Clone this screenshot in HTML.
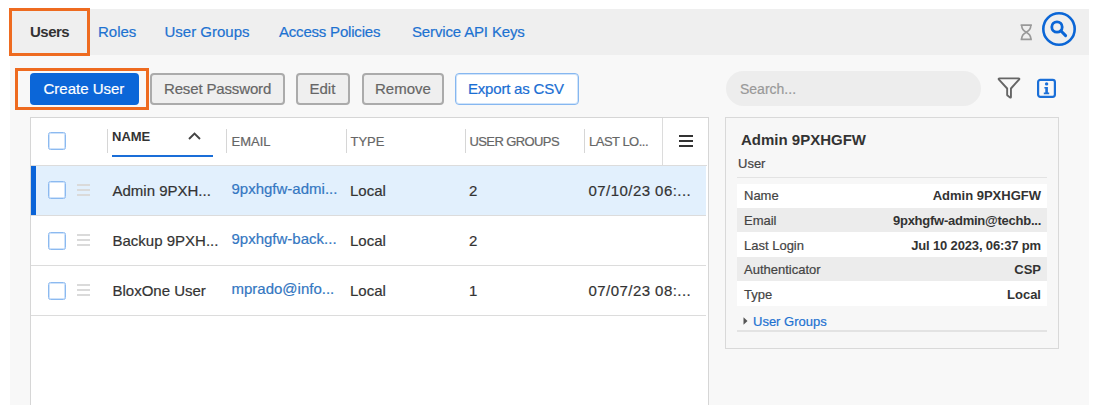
<!DOCTYPE html>
<html><head><meta charset="utf-8">
<style>
*{box-sizing:border-box;margin:0;padding:0}
html,body{width:1097px;height:414px;overflow:hidden;background:#fff;font-family:"Liberation Sans",sans-serif}
.a{position:absolute}
.t{position:absolute;white-space:nowrap;line-height:1;-webkit-text-stroke:0.2px currentColor}
#page{position:absolute;left:10px;top:9px;width:1079px;height:396px;background:#f8f8f8}
#tabs{position:absolute;left:10px;top:9px;width:1079px;height:46px;background:#efefef}
.tab{font-size:15px;color:#1d72d1}
.ob{position:absolute;border:3px solid #ee6b20}
.btn{position:absolute;top:73px;height:32px;border-radius:4px}
.gb{background:#efefef;border:2px solid #ababab}
.bt{font-size:15px;color:#666;top:81px}
.hd{font-size:13px;color:#666}
.sep{position:absolute;width:1px;background:#d6d6d6}
.cb{position:absolute;width:18px;height:18px;border:1px solid #8cbaf0;border-radius:2.5px;background:#fff;box-shadow:inset 0 0 0 1px rgba(165,202,245,0.55)}
.dh{position:absolute;width:13px;height:2px;background:#dadada}
.rt{font-size:15px;color:#333}
.em{font-size:15px;color:#3477c2}
.dl{font-size:13px;color:#444}
.dv{font-size:13px;color:#333;font-weight:bold;-webkit-text-stroke:0}
</style></head><body>
<div id="page"></div>
<div id="tabs"></div>

<!-- tabs -->
<div class="t" style="left:30px;top:24.3px;font-size:15px;color:#333;font-weight:bold;letter-spacing:-0.5px;-webkit-text-stroke:0">Users</div>
<div class="t tab" style="left:98px;top:24.3px">Roles</div>
<div class="t tab" style="left:164.5px;top:24.3px">User Groups</div>
<div class="t tab" style="left:279px;top:24.3px;letter-spacing:-0.2px">Access Policies</div>
<div class="t tab" style="left:412px;top:24.3px;letter-spacing:-0.15px">Service API Keys</div>
<div class="ob" style="left:9px;top:8px;width:81px;height:48px"></div>

<!-- hourglass -->
<svg class="a" style="left:1016px;top:20px" width="20" height="24" viewBox="0 0 20 24">
<path d="M4.6 5.1H15.9M4.6 19.3H15.9" stroke="#999" stroke-width="1.7"/>
<path d="M5.7 5.5C5.7 9.8 8.6 11.4 10.25 12.2C11.9 11.4 14.8 9.8 14.8 5.5M5.7 19C5.7 14.6 8.6 13 10.25 12.2C11.9 13 14.8 14.6 14.8 19" fill="none" stroke="#999" stroke-width="1.6"/>
</svg>
<!-- search circle -->
<svg class="a" style="left:1040px;top:10px" width="38" height="38" viewBox="0 0 38 38">
<circle cx="19" cy="19" r="15.7" fill="none" stroke="#0b66d6" stroke-width="2.6"/>
<circle cx="17" cy="17" r="5.2" fill="none" stroke="#0b66d6" stroke-width="2.8"/>
<path d="M20.8 20.8L25.6 25.6" stroke="#0b66d6" stroke-width="3" stroke-linecap="round"/>
</svg>

<!-- toolbar buttons -->
<div class="btn" style="left:30px;width:109px;background:#0b66d8"></div>
<div class="t" style="left:43.5px;top:81px;font-size:15px;color:#fff">Create User</div>
<div class="btn gb" style="left:150px;width:135px"></div>
<div class="t bt" style="left:164px;letter-spacing:-0.15px">Reset Password</div>
<div class="btn gb" style="left:296px;width:54px"></div>
<div class="t bt" style="left:309.5px">Edit</div>
<div class="btn gb" style="left:361.5px;width:82px"></div>
<div class="t bt" style="left:375px">Remove</div>
<div class="btn" style="left:455px;width:124px;background:#fff;border:1px solid #86b7f0;box-shadow:inset 0 0 0 1px rgba(150,195,245,0.45)"></div>
<div class="t bt" style="left:468px;color:#1a6ed3;letter-spacing:-0.2px">Export as CSV</div>
<div class="ob" style="left:15px;top:68px;width:134px;height:42px"></div>

<!-- search -->
<div class="a" style="left:726px;top:71px;width:255px;height:35px;border-radius:18px;background:#ededed"></div>
<div class="t" style="left:740px;top:82px;font-size:14px;color:#999">Search...</div>
<svg class="a" style="left:996px;top:76px" width="26" height="25" viewBox="0 0 26 25">
<path d="M3.6 2.35H22.4Q23.9 2.5 23 3.6L14.95 12.5V21Q14.9 22 14 21.4L11.6 19.6Q11.15 19.3 11.15 18.7V12.5L3 3.6Q2.1 2.5 3.6 2.35Z" fill="none" stroke="#666" stroke-width="1.9" stroke-linejoin="round"/>
</svg>
<svg class="a" style="left:1036px;top:78px" width="22" height="22" viewBox="0 0 22 22">
<rect x="2.1" y="1.8" width="16.8" height="17.1" rx="2.3" fill="none" stroke="#1a6fd8" stroke-width="2.2"/>
<circle cx="10.6" cy="5.9" r="1.7" fill="#1a6fd8"/>
<path d="M8.4 9H11.9V14.4H13.2V16.2H7.8V14.4H9.3V10.6H8.4Z" fill="#1a6fd8"/>
</svg>

<!-- table -->
<div class="a" style="left:30px;top:117px;width:679px;height:288px;background:#fff;border:1px solid #d6d6d6;border-bottom:none"></div>
<div class="a" style="left:31px;top:165px;width:676px;height:1px;background:#dcdcdc"></div>
<div class="a" style="left:31px;top:166px;width:675px;height:49px;background:#e2f0fd"></div>
<div class="a" style="left:31px;top:166px;width:5px;height:49px;background:#0b64d8"></div>
<div class="a" style="left:31px;top:215px;width:675px;height:1px;background:#dcdcdc"></div>
<div class="a" style="left:31px;top:265px;width:675px;height:1px;background:#dcdcdc"></div>
<div class="a" style="left:31px;top:315px;width:675px;height:1px;background:#dcdcdc"></div>
<div class="a" style="left:662px;top:118px;width:1px;height:47px;background:#dcdcdc"></div>

<!-- header -->
<div class="cb" style="left:48px;top:132px"></div>
<div class="sep" style="left:107px;top:129px;height:24px"></div>
<div class="t" style="left:112px;top:130px;font-size:13px;color:#333;font-weight:bold;-webkit-text-stroke:0">NAME</div>
<svg class="a" style="left:186px;top:130px" width="17" height="11" viewBox="0 0 17 11">
<path d="M3 9L8.5 3.5L14 9" fill="none" stroke="#444" stroke-width="1.9"/>
</svg>
<div class="a" style="left:112px;top:155px;width:100.5px;height:1.5px;background:#1a6ed8"></div>
<div class="sep" style="left:226px;top:129px;height:24px"></div>
<div class="t hd" style="left:231.5px;top:135px">EMAIL</div>
<div class="sep" style="left:345.5px;top:129px;height:24px"></div>
<div class="t hd" style="left:350.5px;top:135px">TYPE</div>
<div class="sep" style="left:464.5px;top:129px;height:24px"></div>
<div class="t hd" style="left:469.5px;top:135px;letter-spacing:-0.6px">USER GROUPS</div>
<div class="sep" style="left:583.5px;top:129px;height:24px"></div>
<div class="t hd" style="left:589px;top:135px;letter-spacing:-0.5px">LAST LO...</div>
<div class="a" style="left:679px;top:135px;width:14px;height:2.4px;background:#333"></div>
<div class="a" style="left:679px;top:140px;width:14px;height:2.4px;background:#333"></div>
<div class="a" style="left:679px;top:145px;width:14px;height:2.4px;background:#333"></div>

<!-- rows -->
<div class="cb" style="left:48px;top:181px"></div>
<div class="dh" style="left:77px;top:184px"></div><div class="dh" style="left:77px;top:189px"></div><div class="dh" style="left:77px;top:194px"></div>
<div class="t rt" style="left:112.5px;top:183px">Admin 9PXH...</div>
<div class="t em" style="left:231.5px;top:181px">9pxhgfw-admi...</div>
<div class="t rt" style="left:350px;top:183px">Local</div>
<div class="t rt" style="left:469px;top:183px">2</div>
<div class="t rt" style="left:588.5px;top:183px;letter-spacing:0.45px">07/10/23 06:...</div>

<div class="cb" style="left:48px;top:231.5px"></div>
<div class="dh" style="left:77px;top:234px"></div><div class="dh" style="left:77px;top:239px"></div><div class="dh" style="left:77px;top:244px"></div>
<div class="t rt" style="left:112.5px;top:233px">Backup 9PXH...</div>
<div class="t em" style="left:231.5px;top:231px">9pxhgfw-back...</div>
<div class="t rt" style="left:350px;top:233px">Local</div>
<div class="t rt" style="left:469px;top:233px">2</div>

<div class="cb" style="left:48px;top:281.5px"></div>
<div class="dh" style="left:77px;top:284px"></div><div class="dh" style="left:77px;top:289px"></div><div class="dh" style="left:77px;top:294px"></div>
<div class="t rt" style="left:112.5px;top:283px">BloxOne User</div>
<div class="t em" style="left:231.5px;top:281px">mprado@info...</div>
<div class="t rt" style="left:350px;top:283px">Local</div>
<div class="t rt" style="left:469px;top:283px">1</div>
<div class="t rt" style="left:588.5px;top:283px;letter-spacing:0.45px">07/07/23 08:...</div>

<!-- detail panel -->
<div class="a" style="left:725px;top:117px;width:334px;height:232px;border:1px solid #d9d9d9;background:#f7f7f7"></div>
<div class="t" style="left:741px;top:131.5px;font-size:15px;color:#333;font-weight:bold;-webkit-text-stroke:0">Admin 9PXHGFW</div>
<div class="t dl" style="left:738px;top:157px">User</div>
<div class="a" style="left:737px;top:177px;width:310px;height:1px;background:#e3e3e3"></div>
<div class="a" style="left:737px;top:184px;width:310px;height:24px;background:#fff"></div>
<div class="a" style="left:737px;top:208px;width:310px;height:24px;background:#ececec"></div>
<div class="a" style="left:737px;top:232px;width:310px;height:25px;background:#fff"></div>
<div class="a" style="left:737px;top:257px;width:310px;height:24px;background:#ececec"></div>
<div class="a" style="left:737px;top:281px;width:310px;height:25px;background:#fff"></div>
<div class="t dl" style="left:744px;top:189.2px">Name</div>
<div class="t dl" style="left:744px;top:214px">Email</div>
<div class="t dl" style="left:744px;top:238.5px">Last Login</div>
<div class="t dl" style="left:744px;top:263px">Authenticator</div>
<div class="t dl" style="left:744px;top:287.5px">Type</div>
<div class="t dv" style="right:56px;top:189.2px">Admin 9PXHGFW</div>
<div class="t dv" style="right:56px;top:214px;letter-spacing:-0.25px">9pxhgfw-admin@techb...</div>
<div class="t dv" style="right:56px;top:238.5px;letter-spacing:-0.15px">Jul 10 2023, 06:37 pm</div>
<div class="t dv" style="right:56px;top:263px">CSP</div>
<div class="t dv" style="right:56px;top:287.5px">Local</div>
<svg class="a" style="left:742px;top:316px" width="7" height="10" viewBox="0 0 7 10"><path d="M1.5 1.2L5.5 5L1.5 8.8Z" fill="#555"/></svg>
<div class="t" style="left:753px;top:314.8px;font-size:13px;color:#1d72d1">User Groups</div>
<div class="a" style="left:737px;top:330px;width:310px;height:2px;background:#e3e3e3"></div>
</body></html>
